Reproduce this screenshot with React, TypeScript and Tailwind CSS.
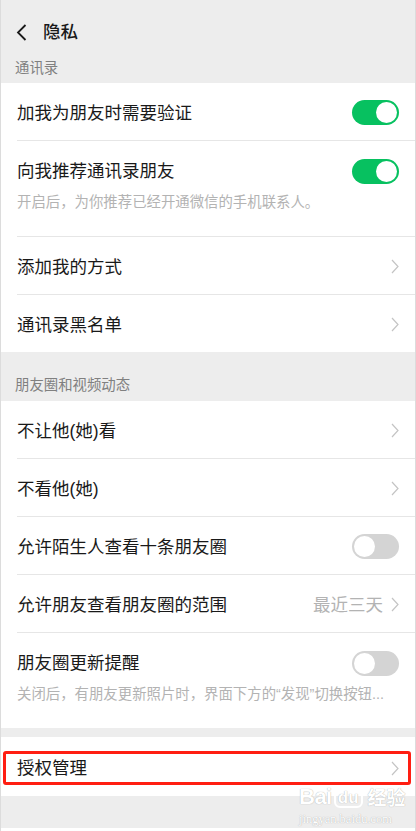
import React from 'react';

const font = { fontFamily: '"Liberation Sans", "Noto Sans CJK SC", sans-serif' };

const Chevron = () => (
  <svg width="8" height="15" viewBox="0 0 8 15" className="shrink-0">
    <polyline points="1,1 7,7.5 1,14" fill="none" stroke="#c4c4c4" strokeWidth="1.2" />
  </svg>
);

const Toggle = ({ on }: { on: boolean }) => (
  <div
    className={
      on
        ? 'w-[47px] h-[25px] rounded-full bg-[#07c160] flex items-center justify-end px-[2px] shrink-0'
        : 'w-[47px] h-[25px] rounded-full bg-[#d4d4d4] flex items-center justify-start px-[2px] shrink-0'
    }
  >
    <div className="w-[21px] h-[21px] rounded-full bg-white" />
  </div>
);

interface RowProps {
  title: string;
  sub?: string;
  right?: React.ReactNode;
  divider?: boolean;
  tall?: boolean;
}

const Row = ({ title, sub, right, divider = true, tall = false }: RowProps) => (
  <div className="bg-white pl-[16px]">
    <div className={divider ? 'border-b border-[#e6e6e6]' : ''}>
      {sub ? (
        <div className="pt-[18px] pb-[24px] pr-[16px]">
          <div className="flex items-center justify-between h-[24px]">
            <span className="text-[17.5px] leading-[24px] text-[#191919]">{title}</span>
            {right}
          </div>
          <div className="mt-[9px] text-[14.4px] leading-[20px] text-[#b3b3b3] whitespace-nowrap">{sub}</div>
        </div>
      ) : (
        <div
          className={
            tall
              ? 'h-[59px] pt-[3px] flex items-center justify-between pr-[16px]'
              : 'h-[57px] pt-[2px] flex items-center justify-between pr-[16px]'
          }
        >
          <span className="text-[17.5px] leading-[24px] text-[#191919]">{title}</span>
          {right}
        </div>
      )}
    </div>
  </div>
);

export default function App() {
  return (
    <div style={font} className="w-[416px] h-[831px] overflow-hidden bg-[#ededed] border-x border-[#dcdcdc] relative">
      <div className="h-[58px] flex items-center pt-[6px] pl-[15px]">
        <svg width="11" height="17" viewBox="0 0 11 17">
          <polyline points="9.5,1 2,8.5 9.5,16" fill="none" stroke="#1a1a1a" strokeWidth="1.8" />
        </svg>
        <span className="ml-[16px] text-[17.5px] leading-[24px] font-medium text-[#191919]">隐私</span>
      </div>
      <div className="pl-[14px] pb-[5px] text-[14.4px] leading-[20px] text-[#808080]">通讯录</div>

      <Row title="加我为朋友时需要验证" right={<Toggle on />} />
      <Row title="向我推荐通讯录朋友" sub="开启后，为你推荐已经开通微信的手机联系人。" right={<Toggle on />} />
      <Row title="添加我的方式" right={<Chevron />} />
      <Row title="通讯录黑名单" right={<Chevron />} divider={false} />

      <div className="pl-[14px] pt-[23px] pb-[6px] text-[14.4px] leading-[20px] text-[#808080]">朋友圈和视频动态</div>

      <Row title="不让他(她)看" right={<Chevron />} />
      <Row title="不看他(她)" right={<Chevron />} />
      <Row title="允许陌生人查看十条朋友圈" right={<Toggle on={false} />} />
      <Row
        title="允许朋友查看朋友圈的范围"
        right={
          <div className="flex items-center gap-[8px]">
            <span className="text-[17.5px] leading-[24px] text-[#b3b3b3]">最近三天</span>
            <Chevron />
          </div>
        }
      />
      <Row
        title="朋友圈更新提醒"
        sub="关闭后，有朋友更新照片时，界面下方的“发现”切换按钮..."
        right={<Toggle on={false} />}
        divider={false}
      />

      <div className="h-[9px]" />

      <div className="relative">
        <Row title="授权管理" right={<Chevron />} divider={false} tall />
        <div className="absolute left-[2px] right-[4px] top-[14px] bottom-[11px] border-[3px] border-[#ff1e12] rounded-[3px]" />
      </div>

      <div className="absolute left-[298px] top-[786px] select-none leading-none" style={{ textShadow: '0 0 1px #9a9a9a' }}>
        <div className="flex items-end text-white">
          <span className="text-[22px] font-bold tracking-[-0.5px]" style={{ fontFamily: '"Liberation Sans", sans-serif' }}>Bai</span>
          <span className="text-[17px] font-bold ml-[2px] px-[2px] rounded-[6px] border-[2px] border-white">du</span>
          <span className="text-[19px] font-bold ml-[5px]">经验</span>
        </div>
        <div className="mt-[5px] text-[12.5px] text-white" style={{ fontFamily: '"Liberation Serif", serif' }}>jingyan.baidu.com</div>
      </div>
      <div className="absolute left-0 right-0 bottom-0 h-[3px] bg-white" />
    </div>
  );
}
